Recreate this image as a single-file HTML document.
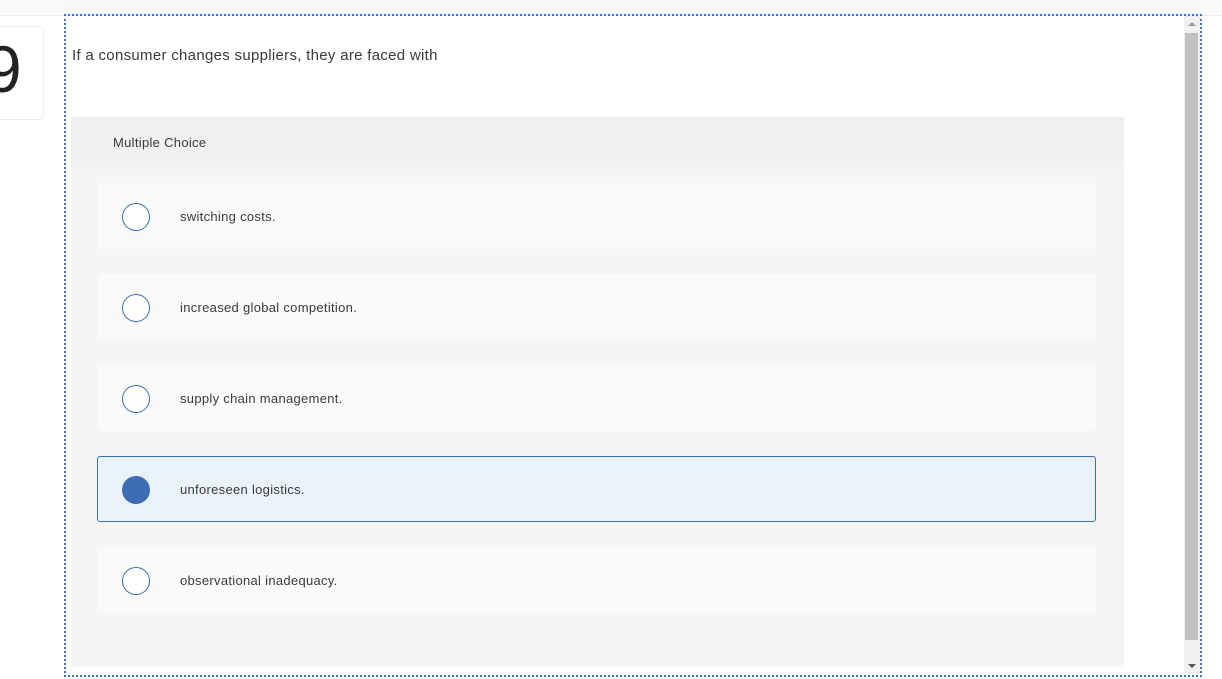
<!DOCTYPE html>
<html><head><style>
body{margin:0;width:1222px;height:679px;overflow:hidden;background:#fff;font-family:"Liberation Sans",sans-serif;position:relative}
.top{position:absolute;left:0;top:0;width:1222px;height:15px;background:#fafafa;border-bottom:1px solid #ececec}
.card{position:absolute;left:-10px;top:26px;width:52px;height:92px;border:1px solid #ececec;border-radius:5px;overflow:hidden}
.card span{position:absolute;left:-6px;top:9px;font-size:66px;color:#222;line-height:1}
.frame{position:absolute;left:64px;top:14px;width:1134px;height:659px;border:2px dotted #3a74c4}
.q{position:absolute;left:72px;top:47px;font-size:15px;color:#3a3a3a;letter-spacing:0.3px}
.panel{position:absolute;left:71px;top:117px;width:1053px;height:550px;background:#f5f5f5}
.hdr{height:50px;background:#f0f0f0;font-size:13px;color:#3a3a3a;line-height:52px;padding-left:42px;letter-spacing:0.3px}
.opt{position:absolute;left:26px;width:999px;height:66px;background:#fafafa;border-radius:3px}
.opt .r{position:absolute;left:25px;top:20px;width:26px;height:26px;border:1px solid #3c6eb4;border-radius:50%;background:#fff}
.opt .t{position:absolute;left:83px;top:1px;line-height:66px;font-size:13px;color:#3a3a3a;letter-spacing:0.3px}
.sel{background:#eaf2fc;border:1px solid #3c6eb4;box-sizing:border-box}
.sel .r{left:24px;top:19px;background:#3c6eb4}
.sel .t{left:82px;line-height:64px}
.sb{position:absolute;left:1184px;top:16px;width:16px;height:658px;background:#f0f0f0}
.thumb{position:absolute;left:1px;top:17px;width:13px;height:607px;background:#c1c1c1}
</style></head><body>
<div class="top"></div>
<div class="card"><span>9</span></div>
<div class="q">If a consumer changes suppliers, they are faced with</div>
<div class="panel">
<div class="hdr">Multiple Choice</div>
<div class="opt" style="top:66px"><div class="r"></div><div class="t">switching costs.</div></div>
<div class="opt" style="top:157px"><div class="r"></div><div class="t">increased global competition.</div></div>
<div class="opt" style="top:248px"><div class="r"></div><div class="t">supply chain management.</div></div>
<div class="opt sel" style="top:339px"><div class="r"></div><div class="t">unforeseen logistics.</div></div>
<div class="opt" style="top:430px"><div class="r"></div><div class="t">observational inadequacy.</div></div>
</div>
<div class="sb"><div class="thumb"></div>
<div style="position:absolute;left:4px;top:6px;border:4px solid transparent;border-bottom:4px solid #999;border-top:0"></div>
<div style="position:absolute;left:4px;top:648px;border:4px solid transparent;border-top:4px solid #555;border-bottom:0"></div>
</div>
<div class="frame"></div>
</body></html>
